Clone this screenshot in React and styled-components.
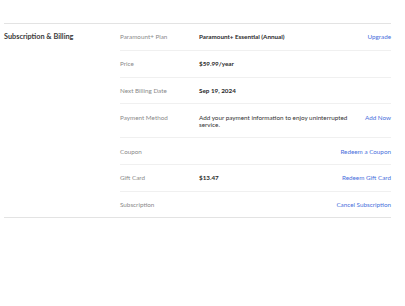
import {styled, createGlobalStyle} from "styled-components";

const GlobalStyle = createGlobalStyle`
  html, body {
    margin: 0;
    padding: 0;
    background: #ffffff;
  }
  body {
    font-family: Lato, "Noto Sans", sans-serif;
  }
`

const Page = styled.div`
    width: 405px;
    height: 306px;
    padding: 23px 14px 0 4px;
    box-sizing: border-box;
`

const Section = styled.section`
    display: grid;
    grid-template-columns: 116px 1fr;
    border-top: 1px solid #e3e3e3;
    border-bottom: 1px solid #e3e3e3;
`

const Title = styled.h2`
    margin: 0;
    padding: 9px 0;
    font-size: 7.3px;
    line-height: 8px;
    font-weight: 700;
    color: #3a3a3a;
`

const Rows = styled.div`
    display: flex;
    flex-direction: column;
`

const Row = styled.div`
    display: grid;
    grid-template-columns: 79px 1fr auto;
    align-items: start;
    padding: 9.4px 0;
    font-size: 6.3px;
    line-height: 7px;
    border-bottom: 1px solid #f0f0f0;

    &:last-child {
      border-bottom: 0;
    }
`

const Label = styled.span`
    color: #8a8a8a;
`

const Value = styled.span`
    color: ${({$note}) => ($note ? "#333333" : "#2a2a2a")};
    font-weight: ${({$note}) => ($note ? 400 : 700)};
    max-width: ${({$note}) => ($note ? "150px" : "none")};
`

const Action = styled.a`
    color: #4a6fdc;
    text-decoration: none;
    text-align: right;
    cursor: pointer;
`

const rows = [
  {label: "Paramount+ Plan", value: "Paramount+ Essential (Annual)", action: "Upgrade"},
  {label: "Price", value: "$59.99/year"},
  {label: "Next Billing Date", value: "Sep 19, 2024"},
  {label: "Payment Method", value: "Add your payment information to enjoy uninterrupted service.", action: "Add Now", note: true},
  {label: "Coupon", action: "Redeem a Coupon"},
  {label: "Gift Card", value: "$13.47", action: "Redeem Gift Card"},
  {label: "Subscription", action: "Cancel Subscription"},
]

const App = () => {
  return (
      <Page>
        <GlobalStyle/>
        <Section>
          <Title>Subscription &amp; Billing</Title>
          <Rows>
            {rows.map((row) => (
                <Row key={row.label}>
                  <Label>{row.label}</Label>
                  <Value $note={row.note}>{row.value}</Value>
                  <Action>{row.action}</Action>
                </Row>
            ))}
          </Rows>
        </Section>
      </Page>
  );
};

export default App
